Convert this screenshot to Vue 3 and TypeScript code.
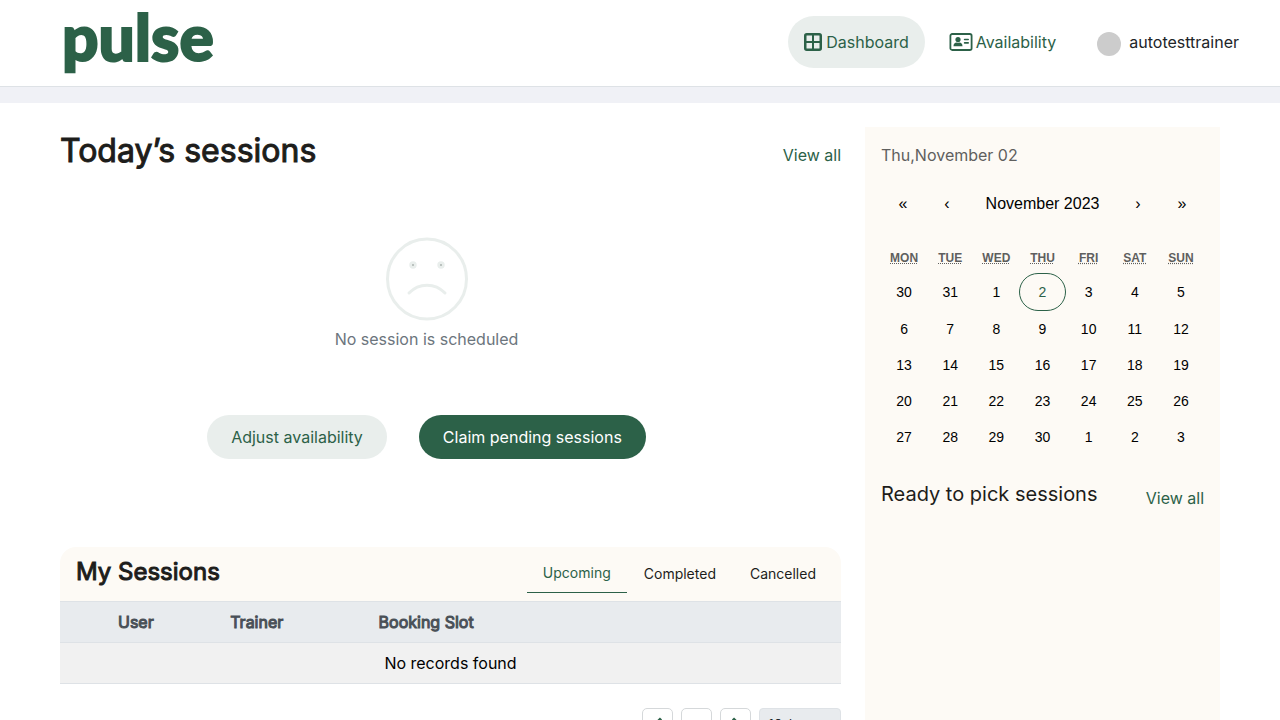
<script setup lang="ts">
import { ref } from 'vue'

interface Day {
  key: string
  day: number
  today: boolean
}

const weekdays = [
  { short: 'Mon', full: 'Monday' },
  { short: 'Tue', full: 'Tuesday' },
  { short: 'Wed', full: 'Wednesday' },
  { short: 'Thu', full: 'Thursday' },
  { short: 'Fri', full: 'Friday' },
  { short: 'Sat', full: 'Saturday' },
  { short: 'Sun', full: 'Sunday' },
]

// The grid starts on the Monday before November 1st, 2023.
const days: Day[] = Array.from({ length: 35 }, (_, i) => {
  const date = new Date(2023, 9, 30 + i)
  return {
    key: `${date.getMonth()}-${date.getDate()}`,
    day: date.getDate(),
    today: date.getMonth() === 10 && date.getDate() === 2,
  }
})

const tabs = ['Upcoming', 'Completed', 'Cancelled']
const activeTab = ref('Upcoming')
const pageSize = ref('10')
</script>

<template>
  <div class="page">
    <header class="topbar">
      <a class="logo" href="#">pulse</a>
      <nav class="nav">
        <a class="nav-link current" href="#">
          <svg width="20" height="20" viewBox="0 0 20 20" fill="none" stroke="currentColor" aria-hidden="true">
            <rect x="2.25" y="2.25" width="15.5" height="15.5" rx="1.5" stroke-width="2.5" />
            <path d="M10 2v16M2 10h16" stroke-width="2" />
          </svg>
          <span>Dashboard</span>
        </a>
        <a class="nav-link" href="#">
          <svg width="24" height="20" viewBox="0 0 24 20" aria-hidden="true">
            <rect x="1.4" y="2" width="21.2" height="16" rx="1.8" fill="none" stroke="currentColor" stroke-width="1.8" />
            <circle cx="9" cy="7.6" r="2.6" fill="currentColor" />
            <path d="M4.5 14.2c0-2.4 1.4-3.7 3-3.7.5.4 2.5.4 3 0 1.6 0 3 1.3 3 3.7z" fill="currentColor" />
            <path d="M15.6 7.5h3.6M15.6 10.9h3.6" stroke="currentColor" stroke-width="1.6" stroke-linecap="round" />
          </svg>
          <span>Availability</span>
        </a>
        <button class="profile" type="button">
          <span class="avatar"></span>
          <span>autotesttrainer</span>
        </button>
      </nav>
    </header>

    <main class="content">
      <div class="primary">
        <section class="today">
          <div class="today-head">
            <h1>Today’s sessions</h1>
            <a class="view-all" href="#">View all</a>
          </div>
          <div class="empty">
            <svg width="84" height="84" viewBox="0 0 84 84" fill="none" stroke="#e9eeec" aria-hidden="true">
              <ellipse cx="42" cy="42" rx="39.5" ry="40" stroke-width="3" />
              <circle cx="28" cy="28" r="2.2" stroke-width="3" />
              <circle cx="56" cy="28" r="2.2" stroke-width="3" />
              <circle cx="28" cy="28" r="1" fill="#a9b2ae" stroke="none" />
              <circle cx="56" cy="28" r="1" fill="#a9b2ae" stroke="none" />
              <path d="M24 56c10-10.5 26-10.5 36 0" stroke-width="3" stroke-linecap="round" />
            </svg>
            <p>No session is scheduled</p>
            <div class="actions">
              <button class="pill" type="button">Adjust availability</button>
              <button class="pill solid" type="button">Claim pending sessions</button>
            </div>
          </div>
        </section>

        <section class="sessions">
          <div class="sessions-head">
            <h2>My Sessions</h2>
            <div class="tabs" role="tablist">
              <button
                v-for="tab in tabs"
                :key="tab"
                type="button"
                role="tab"
                class="tab"
                :class="{ active: tab === activeTab }"
                :aria-selected="tab === activeTab"
                @click="activeTab = tab"
              >
                {{ tab }}
              </button>
            </div>
          </div>
          <table class="table">
            <colgroup>
              <col class="col-user" />
              <col class="col-trainer" />
              <col />
            </colgroup>
            <thead>
              <tr>
                <th>User</th>
                <th>Trainer</th>
                <th>Booking Slot</th>
              </tr>
            </thead>
            <tbody>
              <tr>
                <td colspan="3">No records found</td>
              </tr>
            </tbody>
          </table>
          <div class="pagination">
            <button class="page-btn" type="button" aria-label="Previous page">
              <svg width="16" height="16" viewBox="0 0 16 16" aria-hidden="true"><path d="M11 1.5 4.5 8l6.5 6.5" /></svg>
            </button>
            <button class="page-btn" type="button">1</button>
            <button class="page-btn" type="button" aria-label="Next page">
              <svg width="16" height="16" viewBox="0 0 16 16" aria-hidden="true"><path d="M5 1.5 11.5 8 5 14.5" /></svg>
            </button>
            <select v-model="pageSize" class="page-size" aria-label="Rows per page">
              <option value="10">10 / page</option>
              <option value="20">20 / page</option>
            </select>
          </div>
        </section>
      </div>

      <aside class="side">
        <p class="date">Thu,November 02</p>
        <div class="cal-nav">
          <button type="button" aria-label="Previous year">«</button>
          <button type="button" aria-label="Previous month">‹</button>
          <button type="button" class="cal-label">November 2023</button>
          <button type="button" aria-label="Next month">›</button>
          <button type="button" aria-label="Next year">»</button>
        </div>
        <div class="weekdays">
          <div v-for="w in weekdays" :key="w.short"><abbr :title="w.full">{{ w.short }}</abbr></div>
        </div>
        <div class="days">
          <button v-for="d in days" :key="d.key" type="button" class="day" :class="{ today: d.today }">{{ d.day }}</button>
        </div>
        <div class="ready">
          <h3>Ready to pick sessions</h3>
          <a class="view-all" href="#">View all</a>
        </div>
      </aside>
    </main>
  </div>
</template>

<style>
html {
  scrollbar-width: none;
}
body {
  background: #fff;
}
</style>

<style scoped>
.page {
  font-family: Inter, sans-serif;
  font-size: 16px;
  line-height: 24px;
  color: #1d1d1b;
}
.page *,
.page {
  box-sizing: border-box;
}
h1,
h2,
h3,
p {
  margin: 0;
  font-weight: 400;
}
a {
  color: #2c6148;
  text-decoration: none;
}
button {
  font-family: inherit;
  font-size: 16px;
  line-height: 24px;
  color: inherit;
  background: none;
  border: 0;
  padding: 0;
  cursor: pointer;
}
.topbar {
  display: flex;
  align-items: flex-start;
  justify-content: space-between;
  height: 87px;
  padding: 0 41px 0 62px;
  border-bottom: 1px solid #dee2e6;
}
.logo {
  font-family: Lato, sans-serif;
  font-weight: 900;
  font-size: 64px;
  line-height: 74px;
  -webkit-text-stroke: 2px #2c6148;
}
.nav {
  display: flex;
  align-items: center;
  gap: 9px;
  padding-top: 16px;
}
.nav-link {
  display: flex;
  align-items: center;
  gap: 3px;
  height: 52px;
  padding: 0 16px 0 15px;
  border-radius: 26px;
}
.nav-link.current {
  background: #e9eeec;
}
.profile {
  display: flex;
  align-items: center;
  gap: 8px;
  padding-left: 16px;
  color: #212529;
}
.avatar {
  width: 24px;
  height: 24px;
  margin-top: 4px;
  border-radius: 50%;
  background: #ccc;
}
.content {
  display: grid;
  grid-template-columns: 11fr 5fr;
  gap: 24px;
  padding: 24px 60px 0;
  border-top: 16px solid #f0f1f6;
}
.today-head {
  display: flex;
  align-items: center;
  justify-content: space-between;
  height: 48px;
}
h1 {
  font-size: 32px;
  line-height: 48px;
  -webkit-text-stroke: 1px currentColor;
}
.today-head .view-all {
  padding-top: 8px;
}
.empty {
  display: flex;
  flex-direction: column;
  align-items: center;
  padding: 62px 48px 88px 0;
}
.empty p {
  margin-top: 6px;
  color: #6c757d;
}
.actions {
  display: flex;
  gap: 32px;
  margin-top: 64px;
}
.pill {
  height: 44px;
  padding: 0 24px;
  border-radius: 22px;
  background: #e9eeec;
  color: #2c6148;
}
.pill.solid {
  background: #2c6148;
  color: #fff;
}
.sessions-head {
  display: flex;
  justify-content: space-between;
  align-items: center;
  height: 54px;
  padding: 0 8px 0 16px;
  border-radius: 16px 16px 0 0;
  background: #fdfaf5;
}
h2 {
  padding-bottom: 4px;
  font-size: 24px;
  line-height: 32px;
  -webkit-text-stroke: 1px currentColor;
}
.tabs {
  display: flex;
}
.tab {
  height: 38px;
  padding: 0 17px;
  font-size: 14px;
}
.tab.active {
  padding: 0 16px 2px;
  color: #2c6148;
  border-bottom: 1px solid #2c6148;
}
.table {
  width: 100%;
  table-layout: fixed;
  border-collapse: collapse;
  border-top: 1px solid #dee2e6;
}
.col-user {
  width: 20%;
}
.col-trainer {
  width: 19%;
}
th,
td {
  height: 41px;
  padding: 0 14px;
  border-bottom: 1px solid #dee2e6;
}
th {
  text-align: left;
  font-weight: 400;
  color: #495057;
  background: #e8ebee;
  -webkit-text-stroke: 1px currentColor;
}
th:first-child {
  padding-left: 58px;
}
td {
  text-align: center;
  color: #000;
  background: #f1f1f1;
}
.pagination {
  display: flex;
  justify-content: flex-end;
  gap: 8px;
  padding: 24px 0;
}
.page-btn {
  display: flex;
  align-items: center;
  justify-content: center;
  width: 31px;
  height: 33px;
  border: 1px solid #d5d8da;
  border-radius: 5px;
  color: #2c6148;
  font-size: 12px;
}
.page-btn path {
  fill: none;
  stroke: currentColor;
  stroke-width: 3;
}
.page-size {
  width: 82px;
  height: 33px;
  padding: 0 8px;
  border: 1px solid #dee2e6;
  border-radius: 4px;
  background: #e8ebee;
  color: #212529;
  font-family: inherit;
  font-size: 14px;
  appearance: none;
}
.side {
  padding: 16px 16px 240px;
  background: #fdfaf5;
}
.date {
  color: #5f5f5e;
}
.cal-nav,
.weekdays,
.days {
  font-family: "Liberation Sans", Arial, sans-serif;
}
.cal-nav {
  display: flex;
  height: 42px;
  margin: 16px 0 18px;
  color: #000;
}
.cal-nav button {
  width: 44px;
  font-family: inherit;
}
.cal-nav .cal-label {
  flex: 1;
}
.weekdays,
.days {
  display: grid;
  grid-template-columns: repeat(7, 1fr);
}
.weekdays {
  height: 30px;
  align-items: center;
  text-align: center;
  font-size: 12px;
  font-weight: 700;
  line-height: 14px;
  text-transform: uppercase;
  color: #5f5f5e;
}
.weekdays abbr {
  text-decoration: underline dotted;
}
.day {
  height: 36px;
  font-family: inherit;
  font-size: 14px;
  line-height: 16px;
  color: #000;
}
.day.today {
  height: 38px;
  border: 1px solid #2c6148;
  border-radius: 19px;
  color: #2c6148;
}
.days {
  align-items: center;
}
.ready {
  display: flex;
  align-items: center;
  justify-content: space-between;
  margin-top: 23px;
}
h3 {
  font-size: 20px;
  line-height: 30px;
}
.ready .view-all {
  padding-top: 8px;
}
</style>
